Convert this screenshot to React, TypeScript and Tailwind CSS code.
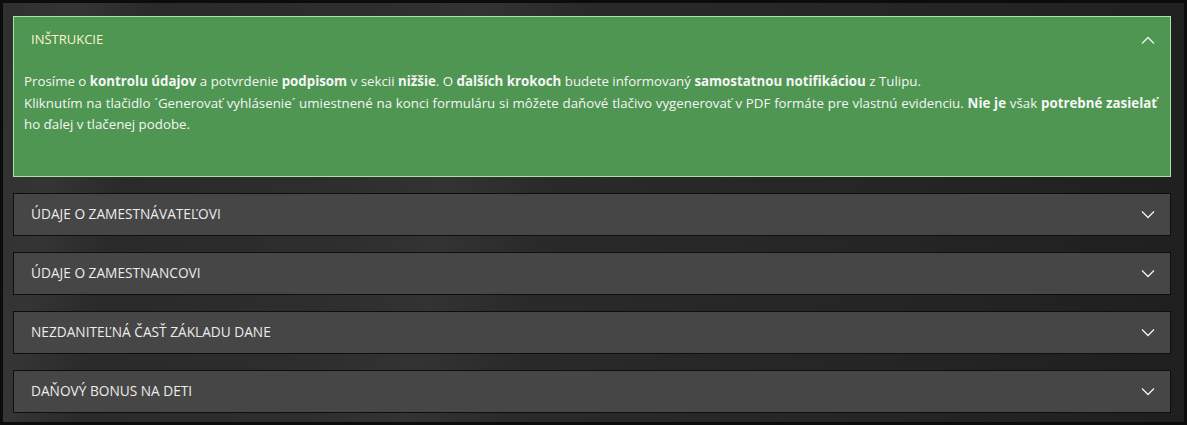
const sections = [
  "ÚDAJE O ZAMESTNÁVATEĽOVI",
  "ÚDAJE O ZAMESTNANCOVI",
  "NEZDANITEĽNÁ ČASŤ ZÁKLADU DANE",
  "DAŇOVÝ BONUS NA DETI",
];

function Chevron({ up = false }: { up?: boolean }) {
  return (
    <svg width="14" height="8" viewBox="0 0 14 8" fill="none" className="shrink-0">
      <path
        d={up ? "M1 7.5 L7 1.5 L13 7.5" : "M1 0.5 L7 6.5 L13 0.5"}
        stroke="#f2f2f2"
        strokeWidth="1.3"
      />
    </svg>
  );
}

export default function App() {
  return (
    <div className="w-[1187px] h-[425px] border-[3px] border-[#0c0c0c] bg-[#1e1e1e] overflow-hidden font-['Open_Sans',sans-serif]">
      <div className="h-full pl-[10px] pr-[13px] pt-[13px] flex flex-col gap-[16px] bg-[linear-gradient(100deg,#2f2f2f_0%,#353535_6%,#2a2a2a_12%,#2e2e2e_30%,#333333_38%,#2a2a2a_46%,#262626_70%,#1f1f1f_100%)]">
        <div className="h-[161px] border border-[#a6e6a6] bg-[#4e9652]">
          <div className="h-[45px] pl-[17px] pr-[15px] flex items-center justify-between">
            <span className="text-[13px] text-[#fbf5cf]">INŠTRUKCIE</span>
            <Chevron up />
          </div>
          <div className="mt-[9px] pl-[10px] pr-[13px] text-[13.3px] leading-[21.5px] text-[#f5f5f5] text-justify">
            <p>
              Prosíme o <b>kontrolu údajov</b> a potvrdenie <b>podpisom</b> v sekcii <b>nižšie</b>. O{" "}
              <b>ďalších krokoch</b> budete informovaný <b>samostatnou notifikáciou</b> z Tulipu.
            </p>
            <p>
              Kliknutím na tlačidlo ´Generovať vyhlásenie´ umiestnené na konci formuláru si môžete daňové tlačivo
              vygenerovať v PDF formáte pre vlastnú evidenciu. <b>Nie je</b> však <b>potrebné zasielať</b> ho ďalej v
              tlačenej podobe.
            </p>
          </div>
        </div>
        {sections.map((title) => (
          <div
            key={title}
            className="h-[43px] border border-[#0e0e0e] bg-[#464646] pl-[17px] pr-[15px] flex items-center justify-between"
          >
            <span className="text-[13.7px] text-[#ececec]">{title}</span>
            <Chevron />
          </div>
        ))}
      </div>
    </div>
  );
}
